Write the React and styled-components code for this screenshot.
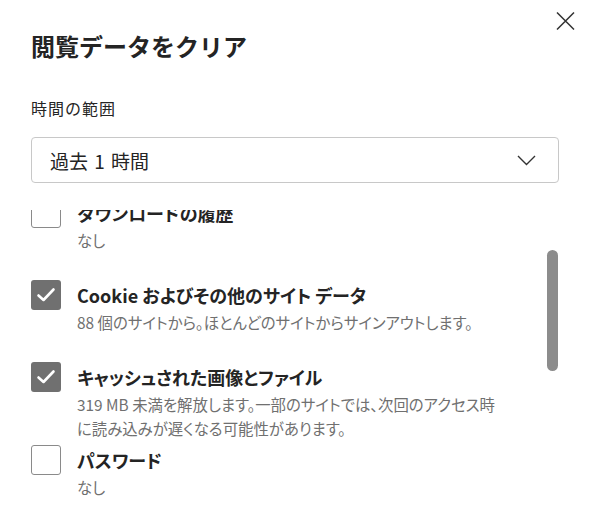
import React, { useLayoutEffect, useRef } from 'react';
import styled, { createGlobalStyle } from 'styled-components';

const GlobalStyle = createGlobalStyle`
  html, body {
    margin: 0;
    background: #fff;
  }
  body {
    font-family: "Noto Sans CJK JP", "Noto Sans", sans-serif;
    color: #242424;
  }
`;

const Dialog = styled.div`
  position: relative;
  width: 592px;
  height: 532px;
  box-sizing: border-box;
  padding: 30px 33px 24px 31px;
  display: flex;
  flex-direction: column;
  overflow: hidden;
`;

const CloseButton = styled.button`
  position: absolute;
  top: 11px;
  right: 17px;
  width: 20px;
  height: 20px;
  padding: 0;
  border: none;
  background: none;
  display: flex;
  align-items: center;
  justify-content: center;
  cursor: pointer;
`;

const Title = styled.h1`
  margin: 0;
  font-size: 24px;
  font-weight: 700;
  line-height: 32px;
  color: #242424;
`;

const FieldLabel = styled.div`
  margin-top: 36px;
  font-size: 16px;
  line-height: 20px;
  letter-spacing: 1px;
  color: #242424;
`;

const Select = styled.div`
  margin-top: 19px;
  height: 46px;
  box-sizing: border-box;
  border: 1px solid #c8c8c8;
  border-radius: 4px;
  padding: 0 22px 0 18px;
  display: flex;
  align-items: center;
  justify-content: space-between;
  font-size: 19px;
  word-spacing: 2px;
  color: #242424;
`;

const ListFrame = styled.div`
  position: relative;
  margin-top: 27px;
  flex: 1;
  min-height: 0;
`;

const ListScroll = styled.div`
  height: 100%;
  overflow-y: auto;
  scrollbar-width: none;
  &::-webkit-scrollbar {
    display: none;
  }
`;

const Thumb = styled.div`
  position: absolute;
  top: 40px;
  right: 1px;
  width: 11px;
  height: 121px;
  border-radius: 6px;
  background: #8c8c8c;
`;

const Item = styled.label`
  display: flex;
  gap: 16px;
  min-height: 77px;
  margin-bottom: 5px;
`;

const Box = styled.span`
  flex: none;
  width: 30px;
  height: 30px;
  box-sizing: border-box;
  border-radius: 3px;
  display: flex;
  align-items: center;
  justify-content: center;
  background: ${(p) => (p.$checked ? '#707070' : '#fff')};
  border: ${(p) => (p.$checked ? 'none' : '1px solid #8a8a8a')};
`;

const ItemText = styled.div`
  display: flex;
  flex-direction: column;
  max-width: 424px;
`;

const ItemTitle = styled.span`
  font-size: 18px;
  font-weight: 700;
  line-height: 30px;
  color: #242424;
  font-feature-settings: "palt";
`;

const ItemDesc = styled.span`
  font-size: 15.4px;
  line-height: 24px;
  color: #707070;
  font-feature-settings: "palt";
`;

const items = [
  { title: '閲覧の履歴', desc: 'なし', checked: false },
  { title: 'ダウンロードの履歴', desc: 'なし', checked: false },
  {
    title: 'Cookie およびその他のサイト データ',
    desc: '88 個のサイトから。ほとんどのサイトからサインアウトします。',
    checked: true,
  },
  {
    title: 'キャッシュされた画像とファイル',
    desc: '319 MB 未満を解放します。一部のサイトでは、次回のアクセス時に読み込みが遅くなる可能性があります。',
    checked: true,
  },
  { title: 'パスワード', desc: 'なし', checked: false },
  { title: 'オートフィル フォーム データ (フォームやカードなど)', desc: 'なし', checked: false },
  { title: 'サイトのアクセス許可', desc: 'なし', checked: false },
  { title: 'ホストされているアプリのデータ', desc: 'なし', checked: false },
];

function Check() {
  return (
    <svg width="20" height="16" viewBox="0 0 20 16" fill="none">
      <path d="M2.5 8.5 L7.5 13 L17.5 2.5" stroke="#fff" strokeWidth="2.6" strokeLinecap="round" strokeLinejoin="round" />
    </svg>
  );
}

export default function App() {
  const listRef = useRef(null);

  useLayoutEffect(() => {
    if (listRef.current) listRef.current.scrollTop = 94;
  }, []);

  return (
    <>
      <GlobalStyle />
      <Dialog>
        <CloseButton aria-label="閉じる">
          <svg width="19" height="18" viewBox="0 0 19 18" fill="none">
            <path d="M1 0.5 L18 17.5 M18 0.5 L1 17.5" stroke="#333" strokeWidth="1.5" />
          </svg>
        </CloseButton>
        <Title>閲覧データをクリア</Title>
        <FieldLabel>時間の範囲</FieldLabel>
        <Select>
          <span>過去 1 時間</span>
          <svg width="19" height="11" viewBox="0 0 19 11" fill="none">
            <path d="M1 1 L9.5 9.5 L18 1" stroke="#333" strokeWidth="1.4" />
          </svg>
        </Select>
        <ListFrame>
          <ListScroll ref={listRef}>
            {items.map((it) => (
              <Item key={it.title}>
                <Box $checked={it.checked}>{it.checked && <Check />}</Box>
                <ItemText>
                  <ItemTitle>{it.title}</ItemTitle>
                  <ItemDesc>{it.desc}</ItemDesc>
                </ItemText>
              </Item>
            ))}
          </ListScroll>
          <Thumb />
        </ListFrame>
      </Dialog>
    </>
  );
}
